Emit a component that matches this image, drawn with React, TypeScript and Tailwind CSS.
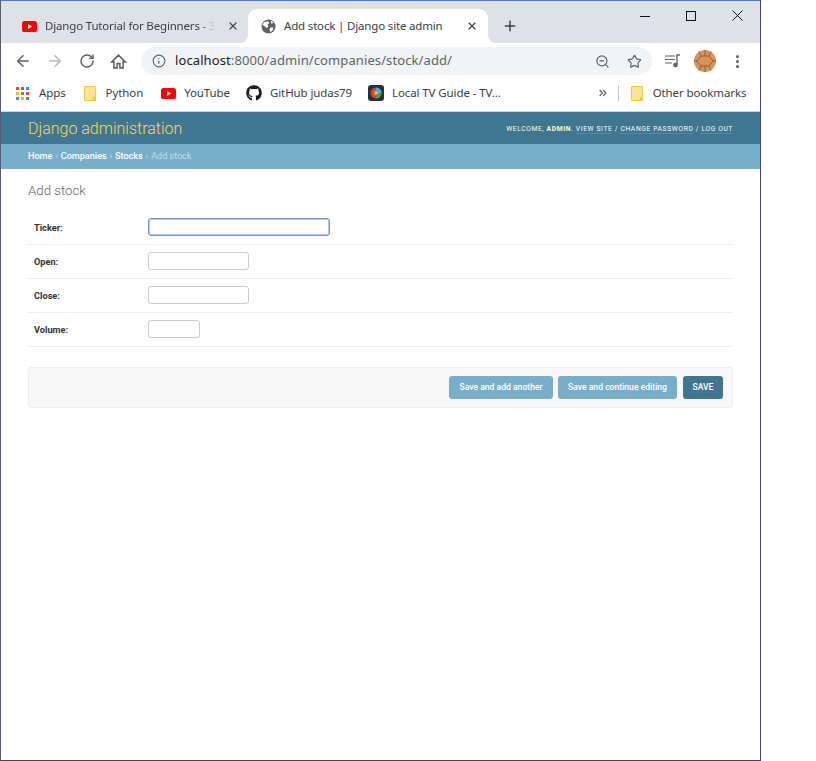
import { ArrowLeft, ArrowRight, RotateCw, Info, ZoomOut, Star, X, Plus, ChevronsRight } from "lucide-react";
import { FaGithub } from "react-icons/fa";
import { ReactNode } from "react";

const Yt = () => (
  <svg width="15" height="11" viewBox="0 0 15 11" className="shrink-0">
    <rect width="15" height="11" rx="2.6" fill="#ff0000" />
    <path d="M6 3 L10 5.5 L6 8 Z" fill="#fff" />
  </svg>
);

const Folder = () => (
  <svg width="12" height="15" viewBox="0 0 12 15" className="shrink-0">
    <path d="M.5.5h11v14H.5z" fill="#fde293" stroke="#f2c94c" />
    <rect x="9" y="11" width="3" height="4" fill="#f2c94c" />
  </svg>
);

const Globe = () => (
  <svg width="15" height="15" viewBox="0 0 16 16" className="shrink-0">
    <circle cx="8" cy="8" r="7.5" fill="#5f6368" />
    <path d="M3 3.5 L7 2.5 L9 4 L7 6 L8 8 L6 9.5 L3.5 7.5 L1.5 6.5 Z M10 9 L13 9 L12.5 12 L10 14 L9 11 Z M10.5 1.5 L13.5 4 L11 5 Z" fill="#fff" />
  </svg>
);

const HomeIcon = () => (
  <svg width="17" height="17" viewBox="0 0 24 24" className="shrink-0 ml-[15px]">
    <path d="M12 3 L2.5 12.5 H5.5 V21 H10 V15 H14 V21 H18.5 V12.5 H21.5 Z" fill="none" stroke="#5f6368" strokeWidth="2.2" strokeLinejoin="miter" />
  </svg>
);

const Apps = () => {
  const c = ["#ea4335", "#ea4335", "#4285f4", "#fbbc04", "#34a853", "#ea4335", "#4285f4", "#fbbc04", "#34a853"];
  return (
    <div className="grid grid-cols-3 gap-[2px] w-[13px] h-[13px] shrink-0">
      {c.map((x, i) => (
        <div key={i} className="w-[3px] h-[3px]" style={{ backgroundColor: x }} />
      ))}
    </div>
  );
};

const Tv = () => (
  <svg width="16" height="16" viewBox="0 0 16 16" className="shrink-0">
    <rect width="16" height="16" rx="3" fill="#263238" />
    <circle cx="8" cy="8" r="5.5" fill="#e53935" />
    <path d="M8 2.5a5.5 5.5 0 0 1 5.5 5.5H8z" fill="#29b6f6" />
    <path d="M13.5 8A5.5 5.5 0 0 1 8 13.5V8z" fill="#43a047" />
    <path d="M6.5 5.5 L11 8 L6.5 10.5 Z" fill="#fbc02d" />
  </svg>
);

const Avatar = () => (
  <svg width="22" height="22" viewBox="0 0 22 22" className="shrink-0">
    <circle cx="11" cy="11" r="11" fill="#d8935a" />
    <path d="M7 6h8l4 5-4 5H7l-4-5zM7 6 5 1.5M15 6l2-4.5M7 16l-2 4.5M15 16l2 4.5M3 11H0M19 11h3M11 0v6M11 16v6" fill="none" stroke="#8a5a30" strokeWidth="0.9" />
  </svg>
);

const Playlist = () => (
  <svg width="16" height="14" viewBox="0 0 16 14" className="shrink-0">
    <path d="M0 2h10M0 5.5h10M0 9h7" stroke="#5f6368" strokeWidth="1.2" fill="none" />
    <path d="M12 10.5V1h3" stroke="#5f6368" strokeWidth="1.4" fill="none" />
    <circle cx="10.5" cy="11" r="2.3" fill="#5f6368" />
  </svg>
);

const WinMin = () => (
  <svg width="10" height="10" viewBox="0 0 10 10"><path d="M0 5.5h10" stroke="#111" strokeWidth="1" /></svg>
);
const WinMax = () => (
  <svg width="10" height="10" viewBox="0 0 10 10"><rect x=".5" y=".5" width="9" height="9" fill="none" stroke="#111" strokeWidth="1" /></svg>
);
const WinClose = () => (
  <svg width="11" height="11" viewBox="0 0 11 11"><path d="M.5.5l10 10M10.500.5l-10 10" stroke="#111" strokeWidth="1" /></svg>
);

const Bookmark = ({ icon, label, className }: { icon: ReactNode; label: string; className: string }) => (
  <div className={`flex items-center ${className}`}>
    {icon}
    <span>{label}</span>
  </div>
);

const Row = ({ label, width, focus }: { label: string; width: string; focus?: boolean }) => (
  <div className="flex items-center h-[34px] pb-px border-b border-[#eeeeee] pl-[6px]">
    <label className="w-[114px] pt-[2px] text-[9.2px] font-bold text-[#333333]">{label}</label>
    <div
      className={`h-[18px] bg-white rounded-[3px] border ${width} ${focus ? "border-[#7592d6] shadow-[inset_0_0_0_1px_#b4c4ea]" : "border-[#cccccc]"}`}
    />
  </div>
);

export default function App() {
  return (
    <div className="w-[816px] h-[761px] bg-white overflow-hidden">
      <div className="w-[761px] h-[761px] flex flex-col border border-t-[#4a7cc9] border-l-[#5b5b6b] border-r-[#46406a] border-b-[#46406a] font-['Noto_Sans',sans-serif]">
        {/* Tab strip */}
        <div className="h-[42px] shrink-0 bg-[#dee1e6] flex items-end pl-[7px] relative text-[11.5px] tracking-[-0.17px]">
          <div className="w-[240px] h-[34px] flex items-center pl-[14px] pr-[9px] text-[#3c4043]">
            <Yt />
            <span className="ml-[8px] whitespace-nowrap [mask-image:linear-gradient(to_right,black_92%,transparent)]">
              Django Tutorial for Beginners - 3
            </span>
            <X size={12} strokeWidth={2.4} className="ml-auto text-[#45484c] shrink-0" />
          </div>
          <div className="relative w-[240px] h-[34px] bg-white rounded-t-[9px] flex items-center pl-[13px] pr-[10px] text-[#3c4043]">
            <div className="absolute -left-[8px] bottom-0 w-[8px] h-[8px] bg-white">
              <div className="w-full h-full bg-[#dee1e6] rounded-br-[8px]" />
            </div>
            <div className="absolute -right-[8px] bottom-0 w-[8px] h-[8px] bg-white">
              <div className="w-full h-full bg-[#dee1e6] rounded-bl-[8px]" />
            </div>
            <Globe />
            <span className="ml-[8px] whitespace-nowrap">Add stock | Django site admin</span>
            <X size={12} strokeWidth={2.4} className="ml-auto text-[#45484c] shrink-0" />
          </div>
          <Plus size={16} strokeWidth={2.2} className="ml-[14px] mb-[9px] text-[#3c4043]" />
          <div className="absolute right-0 top-[9px] flex items-center">
            <WinMin />
            <div className="ml-[36px]"><WinMax /></div>
            <div className="ml-[36px] mr-[17px]"><WinClose /></div>
          </div>
        </div>
        {/* Toolbar */}
        <div className="h-[33px] shrink-0 flex items-center pt-[3px] pl-[13px] pr-[13px] text-[#5f6368]">
          <ArrowLeft size={18} strokeWidth={2} className="shrink-0" />
          <ArrowRight size={18} strokeWidth={2} className="ml-[14px] text-[#b8babd] shrink-0" />
          <RotateCw size={16} strokeWidth={2.2} className="ml-[15px] shrink-0" />
          <HomeIcon />
          <div className="ml-[14px] w-[511px] h-[28px] shrink-0 bg-[#f1f3f4] rounded-full flex items-center pl-[11px] pr-[10px]">
            <Info size={14} strokeWidth={1.9} className="shrink-0" />
            <span className="ml-[9px] text-[13px] text-[#5f6368] tracking-[0.1px] whitespace-nowrap">
              <span className="text-[#202124]">localhost</span>:8000/admin/companies/stock/add/
            </span>
            <ZoomOut size={15} strokeWidth={1.9} className="ml-auto shrink-0" />
            <Star size={15} strokeWidth={1.9} className="ml-[17px] shrink-0" />
          </div>
          <div className="ml-[13px]"><Playlist /></div>
          <div className="ml-[13px]"><Avatar /></div>
          <div className="ml-[20px] flex flex-col gap-[2px]">
            <div className="w-[3px] h-[3px] rounded-full bg-[#5f6368]" />
            <div className="w-[3px] h-[3px] rounded-full bg-[#5f6368]" />
            <div className="w-[3px] h-[3px] rounded-full bg-[#5f6368]" />
          </div>
        </div>
        {/* Bookmarks */}
        <div className="h-[36px] shrink-0 flex items-center pb-px pl-[15px] text-[11.5px] tracking-[-0.1px] text-[#3c4043] border-b border-[#d5d5d8] whitespace-nowrap">
          <Bookmark icon={<Apps />} label="Apps" className="gap-[10px]" />
          <Bookmark icon={<Folder />} label="Python" className="gap-[10px] ml-[18px]" />
          <Bookmark icon={<Yt />} label="YouTube" className="gap-[8px] ml-[18px]" />
          <Bookmark icon={<FaGithub size={16} className="text-[#1b1f23] shrink-0" />} label="GitHub judas79" className="gap-[8px] ml-[16px]" />
          <Bookmark icon={<Tv />} label="Local TV Guide - TV..." className="gap-[8px] ml-[16px]" />
          <ChevronsRight size={12} strokeWidth={2.4} className="ml-[96px] text-[#5f6368] shrink-0" />
          <div className="ml-[9px] w-px h-[16px] bg-[#c8cacc] shrink-0" />
          <Bookmark icon={<Folder />} label="Other bookmarks" className="gap-[10px] ml-[12px]" />
        </div>
        {/* Django header */}
        <div className="h-[32px] shrink-0 bg-[#417690] flex items-center justify-between pt-[2px] px-[27px] font-['Roboto',sans-serif]">
          <span className="text-[16px] font-light text-[#f5dd5d]">Django administration</span>
          <div className="text-[6.75px] uppercase tracking-[0.6px] text-[#ffffcc] whitespace-nowrap">
            Welcome, <strong className="font-bold">admin</strong>.{" "}
            <span className="text-white border-b border-[#5a8aa3]">View site</span> /{" "}
            <span className="text-white border-b border-[#5a8aa3]">Change password</span> /{" "}
            <span className="text-white border-b border-[#5a8aa3]">Log out</span>
          </div>
        </div>
        <div className="h-[25px] shrink-0 bg-[#79aec8] flex items-center pt-px px-[27px] text-[9.1px] font-['Roboto',sans-serif] text-[#c4dce8]">
          <span className="text-white font-medium">Home</span>
          <span className="mx-[2.8px]">›</span>
          <span className="text-white font-medium">Companies</span>
          <span className="mx-[2.8px]">›</span>
          <span className="text-white font-medium">Stocks</span>
          <span className="mx-[2.8px]">›</span>
          <span>Add stock</span>
        </div>
        {/* Content */}
        <div className="flex-1 px-[27px] pt-[14px] font-['Roboto',sans-serif]">
          <h1 className="text-[13.25px] font-light text-[#666666] leading-[15px]">Add stock</h1>
          <form className="mt-[13px]">
            <Row label="Ticker:" width="w-[182px]" focus />
            <Row label="Open:" width="w-[101px]" />
            <Row label="Close:" width="w-[101px]" />
            <Row label="Volume:" width="w-[52px]" />
            <div className="mt-[20px] h-[41px] bg-[#f8f8f8] border border-[#eeeeee] rounded-[3px] flex items-center justify-end gap-[5px] pr-[9px] text-[8.6px] font-medium text-white">
              <button type="button" className="w-[104px] h-[23px] bg-[#79aec8] rounded-[3px]">Save and add another</button>
              <button type="button" className="w-[119px] h-[23px] bg-[#79aec8] rounded-[3px]">Save and continue editing</button>
              <button type="button" className="w-[40px] h-[23px] ml-px bg-[#417690] rounded-[3px] uppercase">Save</button>
            </div>
          </form>
        </div>
      </div>
    </div>
  );
}
